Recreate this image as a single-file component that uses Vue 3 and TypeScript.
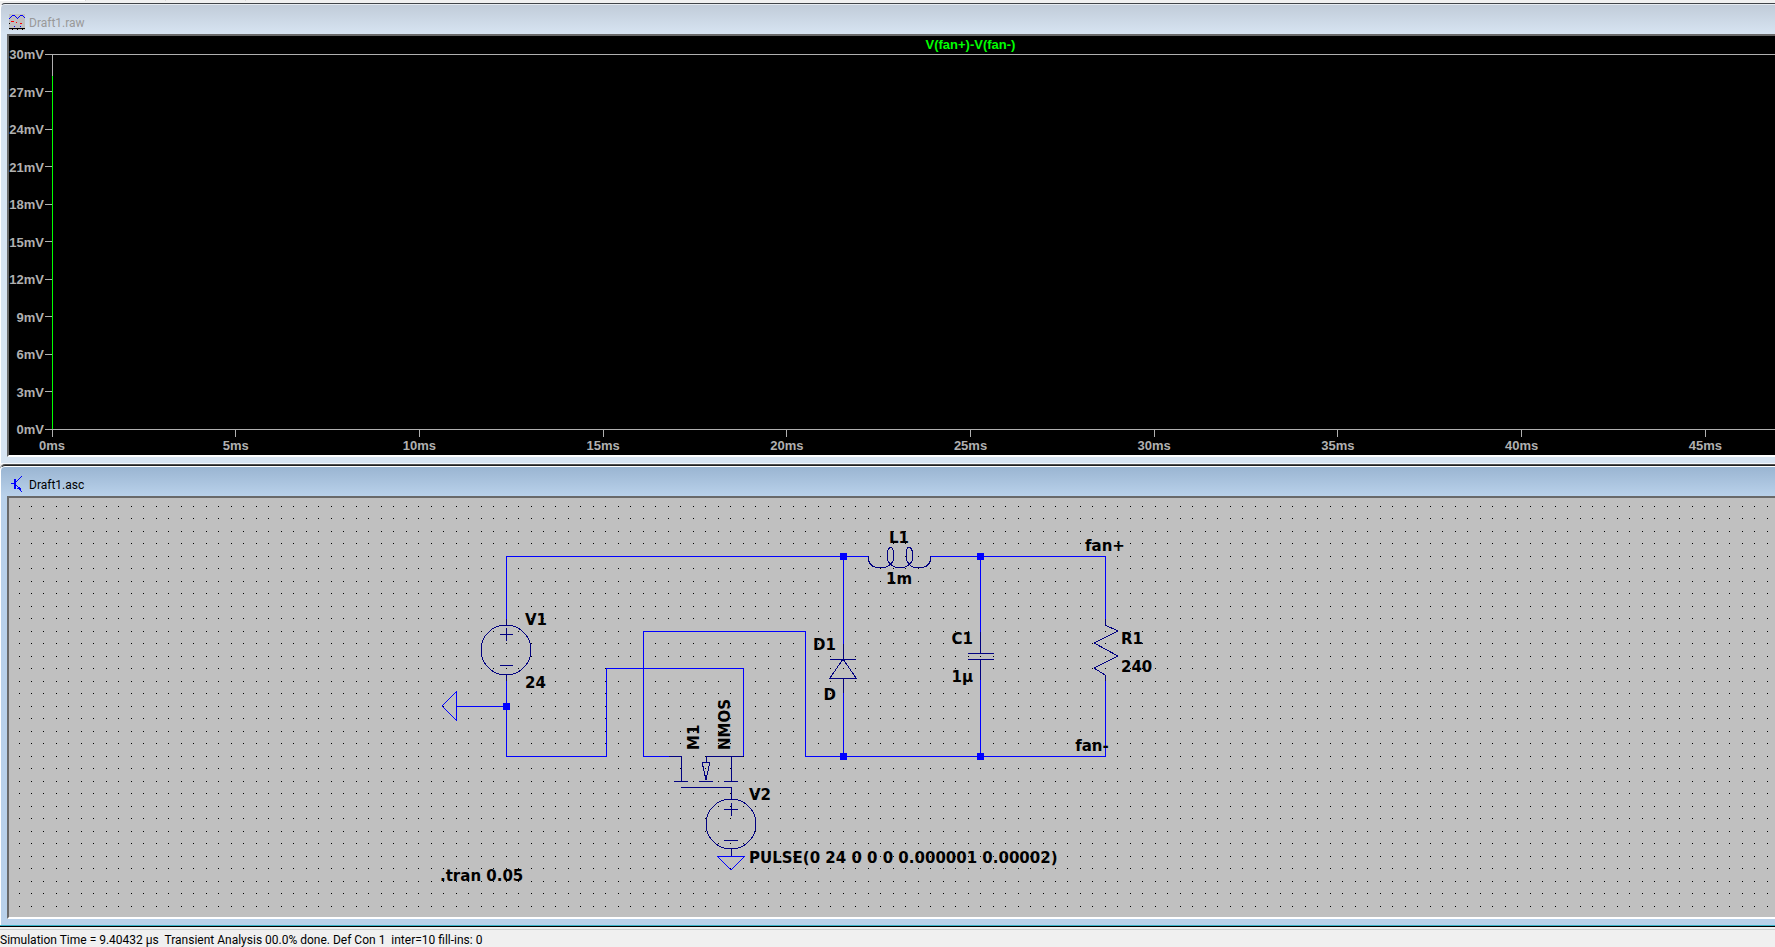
<script setup lang="ts">
import { computed, onBeforeUnmount, onMounted, ref } from 'vue'

interface Tick {
  label: string
  at: string
}

interface PartLabel {
  text: string
  x: number
  y: number
  anchor?: 'start' | 'middle' | 'end'
}

const voltTicks: Tick[] = Array.from({ length: 11 }, (_, i) => ({
  label: `${30 - i * 3}mV`,
  at: `${i * 10}%`,
}))

const timeTicks: Tick[] = Array.from({ length: 10 }, (_, i) => ({
  label: `${i * 5}ms`,
  at: `${i * 10}%`,
}))

const labels: PartLabel[] = [
  { text: 'V1', x: 516, y: 127 },
  { text: '24', x: 516, y: 190 },
  { text: 'L1', x: 890, y: 45, anchor: 'middle' },
  { text: '1m', x: 890, y: 86, anchor: 'middle' },
  { text: 'D1', x: 827, y: 152, anchor: 'end' },
  { text: 'D', x: 827, y: 202, anchor: 'end' },
  { text: 'C1', x: 964, y: 146, anchor: 'end' },
  { text: '1µ', x: 964, y: 184, anchor: 'end' },
  { text: 'R1', x: 1112, y: 146 },
  { text: '240', x: 1112, y: 174 },
  { text: 'fan+', x: 1096, y: 53, anchor: 'middle' },
  { text: 'fan-', x: 1083, y: 253, anchor: 'middle' },
  { text: 'V2', x: 740, y: 302 },
  { text: 'PULSE(0 24 0 0 0 0.000001 0.00002)', x: 740, y: 365 },
  { text: '.tran 0.05', x: 431, y: 383 },
]

const junctions: [number, number][] = [
  [497, 208],
  [834, 58],
  [971, 58],
  [834, 258],
  [971, 258],
]

const status =
  'Simulation Time = 9.40432 µs  Transient Analysis 00.0% done. Def Con 1  inter=10 fill-ins: 0'

// The snap grid is drawn over the whole sheet, one pixel per grid point.
const sheet = ref<HTMLElement | null>(null)
const sheetSize = ref({ width: 0, height: 0 })
let observer: ResizeObserver | undefined

function measure() {
  if (sheet.value) {
    sheetSize.value = { width: sheet.value.clientWidth, height: sheet.value.clientHeight }
  }
}

onMounted(() => {
  measure()
  observer = new ResizeObserver(measure)
  if (sheet.value) observer.observe(sheet.value)
})
onBeforeUnmount(() => observer?.disconnect())

const gridPath = computed(() => {
  const stepX = 1561 / 125
  const stepY = 12.5
  const parts: string[] = []
  for (let r = 0; 8 + r * stepY < sheetSize.value.height - 2; r++) {
    const y = Math.floor(8 + r * stepY)
    for (let c = 0; 10 + c * stepX < sheetSize.value.width; c++) {
      parts.push(`M${Math.floor(10 + c * stepX)} ${y}h1v1h-1z`)
    }
  }
  return parts.join('')
})
</script>

<template>
  <main class="workspace">
    <div class="toolstrip"><span class="tab active"></span><span class="tab"></span><span class="tab"></span></div>

    <section class="win plot-win" aria-label="Draft1.raw">
      <header class="titlebar">
        <svg class="icon" width="16" height="16" shape-rendering="crispEdges" aria-hidden="true">
          <rect width="16" height="16" fill="#c0c0c0" />
          <path fill="#0000ff" d="M0 4h1v1H0zM1 3h1v1H1zM2 2h1v1H2zM3 1h3v1H3zM6 2h1v1H6zM7 3h1v1H7zM8 4h1v1H8zM9 3h1v1H9zM10 2h1v1h-1zM11 1h3v1h-3zM14 2h1v1h-1zM15 3h1v1h-1zM5 12h1v1H5zM11 12h1v1h-1z" />
          <path fill="#ff0000" d="M2 7h3v1H2zM7 8h1v1H7zM11 9h2v1h-2z" />
          <path fill="#000000" d="M0 9h1v1H0zM0 14h16v1H0zM3 15h1v1H3zM8 15h1v1H8zM13 15h1v1h-1z" />
        </svg>
        <h2>Draft1.raw</h2>
      </header>
      <div class="client">
        <svg class="plot" role="img" aria-label="V(fan+)-V(fan-)">
          <svg class="axes" x="43" y="18">
            <text class="trace-name" x="50%" y="-5">V(fan+)-V(fan-)</text>
            <line x1="0" y1="0" x2="100%" y2="0" />
            <line x1="0" y1="100%" x2="100%" y2="100%" />
            <line x1="0" y1="0" x2="0" y2="100%" />
            <line x1="100%" y1="0" x2="100%" y2="100%" />
            <line class="trace" x1="0" y1="22" x2="0" y2="100%" />
            <g v-for="t in voltTicks" :key="t.label">
              <line x1="-7" :y1="t.at" x2="0" :y2="t.at" />
              <text class="volt" x="-8" :y="t.at" dy="5">{{ t.label }}</text>
            </g>
            <svg v-for="t in timeTicks" :key="t.label" class="time" :x="t.at" y="100%">
              <line x1="0" y1="0" x2="0" y2="8" />
              <text x="0" y="21">{{ t.label }}</text>
            </svg>
          </svg>
        </svg>
      </div>
    </section>

    <section class="win sheet-win" aria-label="Draft1.asc">
      <header class="titlebar">
        <svg class="icon" width="16" height="16" shape-rendering="crispEdges" aria-hidden="true">
          <path fill="#0000ff" d="M2 7h3v1H2zM5 3h2v10H5zM7 5h1v1H7zM8 4h1v1H8zM9 3h1v1H9zM10 2h1v1h-1zM11 1h1v1h-1zM12 0h1v1h-1zM7 9h1v1H7zM8 10h1v1H8zM9 11h2v1H9zM8 12h4v1H8zM10 13h2v1h-2zM11 14h1v1h-1zM12 15h1v1h-1z" />
        </svg>
        <h2>Draft1.asc</h2>
      </header>
      <div ref="sheet" class="client sheet">
        <svg class="schematic" role="img" aria-label="Buck converter schematic">
          <path class="grid" :d="gridPath" />

          <g class="part">
            <!-- V1 -->
            <circle cx="497" cy="152" r="25" />
            <path d="M497 121V127M497 177V183M491 136H504M497 130V143M491 167H504" />
            <!-- V2 -->
            <circle cx="722" cy="326" r="25" />
            <path d="M722 351V358M715 311H729M722 305V318M715 342H729" />
            <!-- M1 -->
            <path d="M660 258H672V283M665 283H679M690 283H704M715 283H729M722 258V283M734 258H697V264M693 264H701L697 282ZM672 289H722V301" />
            <!-- D1 -->
            <path d="M834 146V161M821 161H847M834 161L847 180H821ZM834 180V195" />
            <!-- L1 -->
            <path d="M859 58C859 66 864 70 872 70C880 70 885 64 885 58C885 53 883 49 882 49C880 49 878 53 878 58C878 64 883 70 891 70C899 70 904 64 904 58C904 53 902 49 900 49C898 49 897 53 897 58C897 64 901 70 909 70C917 70 922 66 922 58" />
            <!-- C1 -->
            <path d="M971 134V155M959 155H985M959 161H985M971 161V182" />
            <!-- R1 -->
            <path d="M1096 121V127L1109 133L1085 145L1109 158L1085 170L1096 177V183" />
          </g>

          <g class="wire">
            <path d="M497 121V58H859M922 58H1096V121" />
            <path d="M497 183V258H597V170H734V258" />
            <path d="M660 258H634V133H796V258H1096V183" />
            <path d="M834 58V146M834 195V258M971 58V134M971 182V258" />
            <path d="M497 208H447M447 194V222L433 208Z" />
            <path d="M708 358H736L722 372Z" />
          </g>

          <rect v-for="[x, y] in junctions" :key="`${x}-${y}`" class="junction" :x="x - 3" :y="y - 3" width="7" height="7" />

          <text v-for="l in labels" :key="l.text" :x="l.x" :y="l.y" :text-anchor="l.anchor ?? 'start'">{{ l.text }}</text>
          <text transform="translate(690 252) rotate(-90)">M1</text>
          <text transform="translate(721 252) rotate(-90)">NMOS</text>
        </svg>
      </div>
    </section>

    <footer class="status">{{ status }}</footer>
  </main>
</template>

<style>
body {
  margin: 0;
  background: #f0f0f0;
}
</style>

<style scoped>
.workspace {
  display: flex;
  flex-direction: column;
  min-height: 100vh;
  overflow: hidden;
  background: #f0f0f0;
  font-family: 'Segoe UI', Roboto, 'Open Sans', sans-serif;
}

.toolstrip {
  display: flex;
  height: 3px;
}

.tab {
  width: 79px;
  height: 1px;
  border-right: 1px solid #d9d9d9;
}

.tab.active {
  width: 85px;
  background: #ffffff;
}

/* The child windows run past the right edge of the work area. */
.win {
  box-sizing: border-box;
  display: flex;
  flex-direction: column;
  width: calc(100% + 125px);
  padding: 0 7px 6px 6px;
  border-top: 1px solid #404448;
  border-left: 1px solid #ffffff;
  border-top-left-radius: 5px;
}

.plot-win {
  border-bottom: 1px solid #f4f7fb;
  background: linear-gradient(#c0cbd8, #d7e4f2 30px);
  box-shadow: inset 0 1px #e6ebf1;
}

.sheet-win {
  flex: 1;
  margin-top: 1px;
  border-top-color: #202020;
  background: linear-gradient(#99b4d1, #b9d1ea 30px);
  box-shadow: inset 0 1px #ffffff, 0 -1px #505050, 0 1px #3ab3c9, 0 2px #000000;
}

.titlebar {
  display: flex;
  align-items: center;
  gap: 4px;
  height: 30px;
  padding-left: 2px;
}

.icon {
  flex: none;
  margin-top: 6px;
}

.titlebar h2 {
  margin: 8px 0 0;
  font-size: 12px;
  font-weight: 400;
  line-height: 16px;
  color: #000000;
}

.plot-win h2 {
  color: #999999;
}

.client {
  border: 2px solid;
  border-color: #696969 #ffffff #ffffff #696969;
}

.plot-win .client {
  height: 419px;
  background: #000000;
}

.plot {
  display: block;
  width: 100%;
  height: 100%;
  font: 700 13px 'Liberation Sans', Arial, sans-serif;
}

.axes {
  width: calc(100% - 45px);
  height: 375px;
  overflow: visible;
}

.axes line {
  stroke: #b0b0b0;
  shape-rendering: crispEdges;
}

.axes .trace {
  stroke: #00ff00;
}

.axes text {
  fill: #b0b0b0;
  text-anchor: middle;
}

.axes .trace-name {
  fill: #00ff00;
}

.axes .volt {
  text-anchor: end;
}

.time {
  overflow: visible;
}

.sheet {
  position: relative;
  flex: 1;
  min-height: 419px;
  background: #c0c0c0;
}

.schematic {
  position: absolute;
  inset: 0;
  width: 100%;
  height: 100%;
  font: 700 15px Tahoma, 'DejaVu Sans', sans-serif;
}

.grid,
.part,
.wire,
.junction {
  shape-rendering: crispEdges;
}

.part {
  fill: none;
  stroke: #000080;
}

.wire {
  fill: none;
  stroke: #0000ff;
}

.junction {
  fill: #0000ff;
}

.status {
  height: 17px;
  margin-top: 4px;
  border-top: 1px solid #d0d0d0;
  font-size: 12px;
  line-height: 20px;
  white-space: pre;
  color: #000000;
}
</style>
